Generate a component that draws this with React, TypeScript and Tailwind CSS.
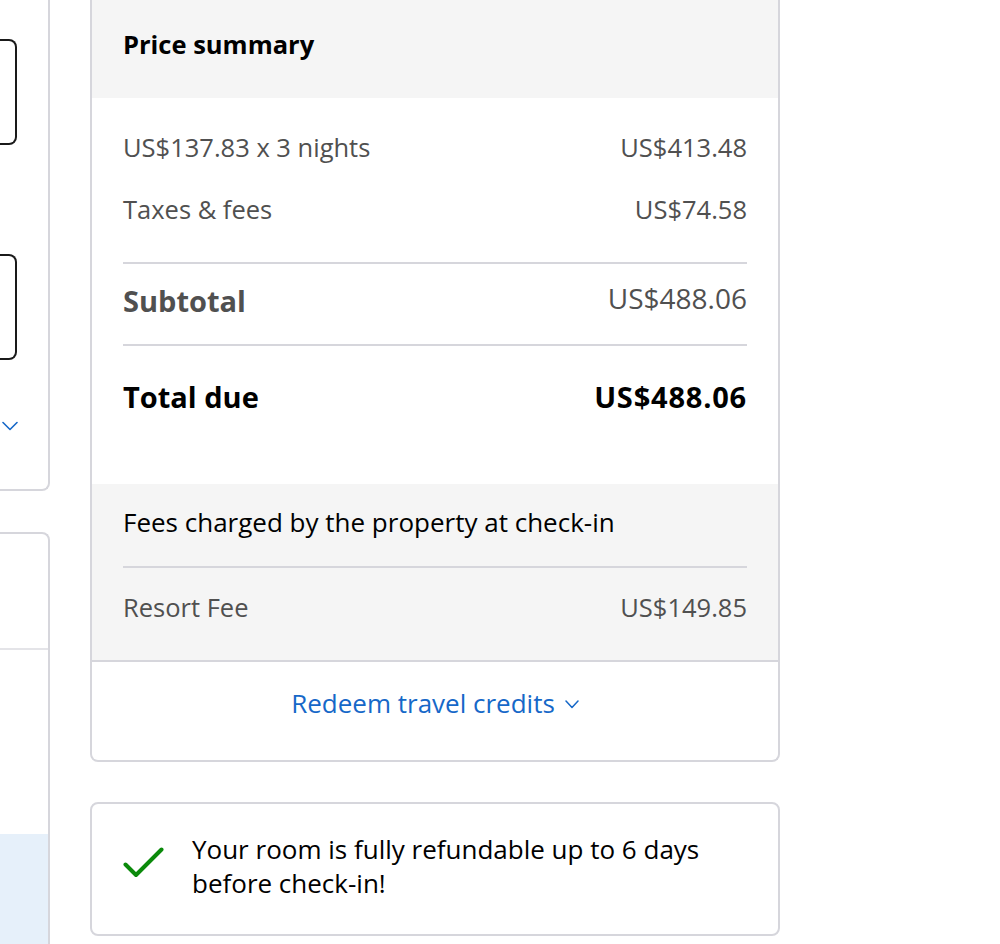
import React from "react";

const grey = "text-[#505050]";

export default function App() {
  return (
    <div className="min-h-screen bg-white font-['Open_Sans',sans-serif] flex gap-[40px] overflow-hidden">
      {/* Left column (partially off-screen) */}
      <div className="w-[50px] shrink-0 flex flex-col gap-[41px]">
        <div className="h-[491px] border-r-2 border-b-2 border-[#d6d6dc] rounded-br-lg pr-[31px] flex flex-col">
          <div className="mt-[39px] h-[106px] border-2 border-l-0 border-[#1a1a1a] rounded-r-lg" />
          <div className="mt-[109px] h-[106px] border-2 border-l-0 border-[#1a1a1a] rounded-r-lg" />
          <div className="mt-[61px] flex justify-end">
            <svg width="16" height="10" viewBox="0 0 16 10" fill="none" className="mr-[-1px]">
              <path d="M1 1.5 L8 8.5 L15 1.5" stroke="#1668c8" strokeWidth="1.6" strokeLinecap="round" strokeLinejoin="round" />
            </svg>
          </div>
        </div>
        <div className="flex-1 border-r-2 border-t-2 border-[#d6d6dc] rounded-tr-lg flex flex-col">
          <div className="h-[116px] border-b-2 border-[#e4e4e8]" />
          <div className="h-[184px]" />
          <div className="flex-1 bg-[#e6f0fa]" />
        </div>
      </div>

      {/* Right column */}
      <div className="w-[690px] shrink-0 flex flex-col gap-[40px]">
        <div className="border-x-2 border-b-2 border-[#d6d6dc] rounded-b-lg overflow-hidden">
          <div className="h-[98px] bg-[#f5f5f5] px-[31px] pt-[28px]">
            <h2 className="text-[25.5px] leading-8 font-bold text-black">Price summary</h2>
          </div>

          <div className="px-[31px] pt-[33px] pb-[69px]">
            <div className={`flex justify-between text-[25.5px] leading-8 ${grey}`}>
              <span>US$137.83 x 3 nights</span>
              <span>US$413.48</span>
            </div>
            <div className={`mt-[30px] flex justify-between text-[25.5px] leading-8 ${grey}`}>
              <span>Taxes &amp; fees</span>
              <span>US$74.58</span>
            </div>
            <div className="mt-[37px] h-[2px] bg-[#d6d6dc]" />
            <div className={`pt-[19px] pb-[25px] flex justify-between items-center ${grey}`}>
              <span className="text-[29px] leading-9 font-bold">Subtotal</span>
              <span className="text-[28px] leading-9 -mt-[6px]">US$488.06</span>
            </div>
            <div className="h-[2px] bg-[#d6d6dc]" />
            <div className="pt-[33px] flex justify-between items-center text-black">
              <span className="text-[29px] leading-9 font-bold">Total due</span>
              <span className="text-[29px] leading-9 font-bold tracking-[0.8px]">US$488.06</span>
            </div>
          </div>

          <div className="bg-[#f5f5f5] px-[31px] pt-[22px] pb-[37px] border-b-2 border-[#d6d6dc]">
            <div className="text-[26px] leading-8 text-black">Fees charged by the property at check-in</div>
            <div className="mt-[28px] h-[2px] bg-[#d6d6dc]" />
            <div className={`mt-[23px] flex justify-between text-[25.5px] leading-8 ${grey}`}>
              <span>Resort Fee</span>
              <span>US$149.85</span>
            </div>
          </div>

          <div className="h-[98px] flex items-start justify-center pt-[24px]">
            <button className="flex items-center gap-[10px] text-[26px] leading-[34px] text-[#1668c8]">
              <span>Redeem travel credits</span>
              <svg width="14" height="9" viewBox="0 0 14 9" fill="none" className="mt-[3px]">
                <path d="M1 1 L7 7.5 L13 1" stroke="#1668c8" strokeWidth="1.5" strokeLinecap="round" strokeLinejoin="round" />
              </svg>
            </button>
          </div>
        </div>

        <div className="border-2 border-[#d6d6dc] rounded-lg px-[31px] pt-[28px] pb-[34px] flex items-center gap-[27px]">
          <svg width="42" height="32" viewBox="0 0 42 32" fill="none" className="shrink-0 -mt-[6px]">
            <path d="M2.5 17.5 L13 28 L38.5 2.5" stroke="#0b8a0b" strokeWidth="4" strokeLinecap="round" strokeLinejoin="round" />
          </svg>
          <p className="text-[26px] leading-[34px] text-black">
            Your room is fully refundable up to 6 days
            <br />
            before check-in!
          </p>
        </div>
      </div>
    </div>
  );
}
